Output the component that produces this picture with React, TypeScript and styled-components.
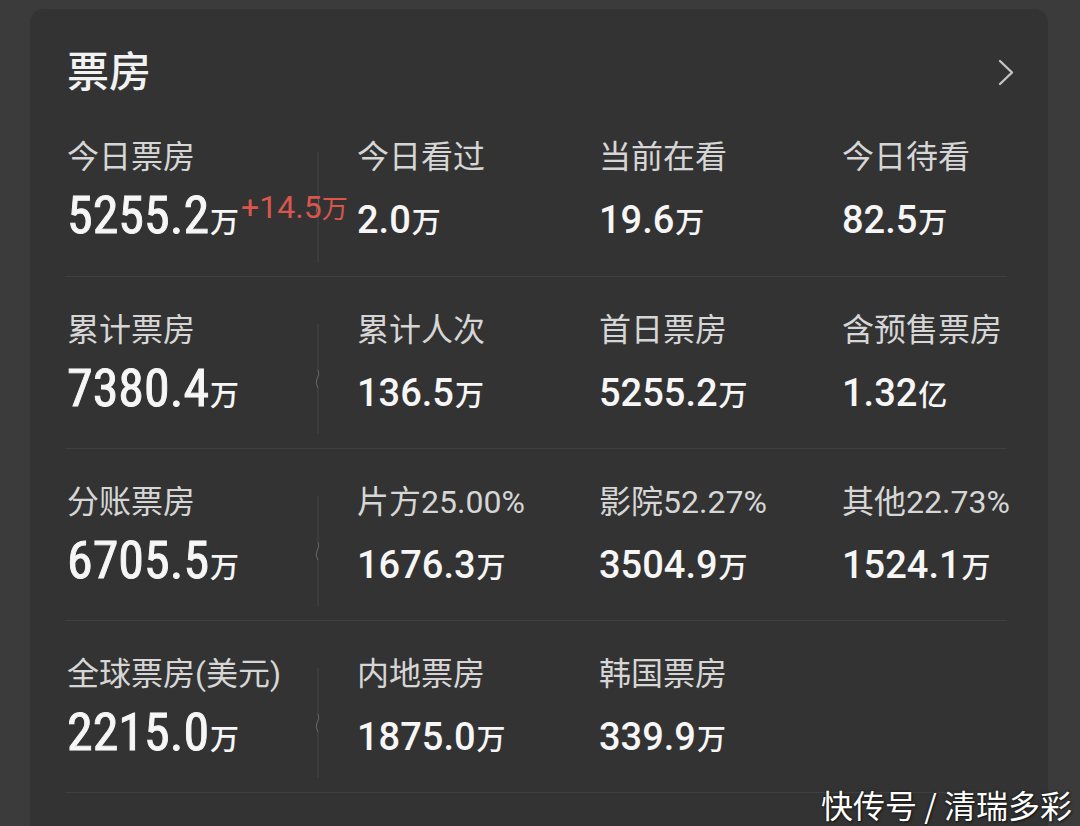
import React from "react";
import styled, { createGlobalStyle } from "styled-components";

const GlobalStyle = createGlobalStyle`
  html, body {
    margin: 0;
    padding: 0;
    background: #3b3b3b;
    height: 826px;
    overflow: hidden;
  }
  body {
    font-family: Roboto, "Noto Sans CJK SC", sans-serif;
  }
`;

interface IStat {
  label: string;
  value: string;
  unit: string;
  delta?: string;
}

const rows: IStat[][] = [
  [
    { label: "今日票房", value: "5255.2", unit: "万", delta: "+14.5" },
    { label: "今日看过", value: "2.0", unit: "万" },
    { label: "当前在看", value: "19.6", unit: "万" },
    { label: "今日待看", value: "82.5", unit: "万" },
  ],
  [
    { label: "累计票房", value: "7380.4", unit: "万" },
    { label: "累计人次", value: "136.5", unit: "万" },
    { label: "首日票房", value: "5255.2", unit: "万" },
    { label: "含预售票房", value: "1.32", unit: "亿" },
  ],
  [
    { label: "分账票房", value: "6705.5", unit: "万" },
    { label: "片方25.00%", value: "1676.3", unit: "万" },
    { label: "影院52.27%", value: "3504.9", unit: "万" },
    { label: "其他22.73%", value: "1524.1", unit: "万" },
  ],
  [
    { label: "全球票房(美元)", value: "2215.0", unit: "万" },
    { label: "内地票房", value: "1875.0", unit: "万" },
    { label: "韩国票房", value: "339.9", unit: "万" },
  ],
];

// column 2 of the grid is the thin separator
const colOf = (j: number) => (j === 0 ? 1 : j + 2);

const Separator = () => (
  <SepWrap>
    <svg width="8" height="110" viewBox="0 0 8 110">
      <path d="M4 0 V46" stroke="#474747" strokeWidth="1" fill="none" />
      <path
        d="M4 46 Q6 50 3 55 Q1 59 4 64"
        stroke="#6a6a6a"
        strokeWidth="1"
        fill="none"
      />
      <path d="M4 64 V110" stroke="#474747" strokeWidth="1" fill="none" />
    </svg>
  </SepWrap>
);

const App = () => {
  return (
    <Page>
      <GlobalStyle />
      <Card>
        <Header>
          <Title>票房</Title>
          <svg width="16" height="27" viewBox="0 0 16 27">
            <polyline
              points="2,2 14,13.5 2,25"
              fill="none"
              stroke="#c4c4c4"
              strokeWidth="2.4"
              strokeLinecap="round"
              strokeLinejoin="round"
            />
          </svg>
        </Header>

        {rows.map((row, i) => (
          <Row key={i} first={i === 0}>
            <Separator />
            {row.map((s, j) => (
              <React.Fragment key={j}>
                <Label col={colOf(j)}>{s.label}</Label>
                <Value col={colOf(j)}>
                  <Num big={j === 0}>{s.value}</Num>
                  <Unit>{s.unit}</Unit>
                  {s.delta && (
                    <Delta>
                      {s.delta}
                      <DeltaUnit>万</DeltaUnit>
                    </Delta>
                  )}
                </Value>
              </React.Fragment>
            ))}
          </Row>
        ))}
        <Row first={false} />
      </Card>
      <Watermark>快传号 / 清瑞多彩</Watermark>
    </Page>
  );
};

const Page = styled.div`
  position: relative;
  height: 826px;
  padding-top: 8px;
  box-sizing: border-box;
`;

const Card = styled.div`
  margin: 0 32px 0 30px;
  height: 840px;
  background: #333333;
  border-radius: 14px;
  padding-left: 37px;
  box-shadow: inset 0 1px 0 rgba(255, 255, 255, 0.04);
`;

const Header = styled.div`
  height: 96px;
  box-sizing: border-box;
  padding: 40px 34px 0 0;
  display: flex;
  justify-content: space-between;
  align-items: flex-start;
  svg {
    margin-top: 11px;
  }
`;

const Title = styled.div`
  font-size: 42px;
  line-height: 50px;
  color: #f2f2f2;
  font-weight: 500;
`;

const Row = styled.div<{ first: boolean }>`
  height: 172px;
  box-sizing: border-box;
  margin-right: 41px;
  margin-left: -2px;
  padding: 33px 0 0 2px;
  border-top: ${(p) => (p.first ? "none" : "1px solid #3f3f3f")};
  display: grid;
  grid-template-columns: 251px 39px 242px 243px 1fr;
  grid-template-rows: 40px auto;
  row-gap: 11px;
  align-items: baseline;
`;

const SepWrap = styled.div`
  grid-column: 2;
  grid-row: 1 / span 2;
  align-self: center;
  margin-left: -4px;
  height: 110px;
  svg {
    display: block;
  }
`;

const Label = styled.div<{ col: number }>`
  grid-column: ${(p) => p.col};
  grid-row: 1;
  font-size: 32px;
  line-height: 40px;
  color: #d6d6d6;
  white-space: nowrap;
`;

const Value = styled.div<{ col: number }>`
  grid-column: ${(p) => p.col};
  grid-row: 2;
  white-space: nowrap;
  color: #f6f6f6;
  line-height: 56px;
`;

const Num = styled.span<{ big: boolean }>`
  font-family: ${(p) =>
    p.big ? `"Liberation Sans Narrow", "Roboto Condensed", Roboto` : "Roboto"},
    sans-serif;
  font-size: ${(p) => (p.big ? "52px" : "38px")};
  font-weight: ${(p) => (p.big ? 400 : 500)};
  -webkit-text-stroke: ${(p) => (p.big ? "0.9px currentColor" : "0")};
`;

const Unit = styled.span`
  font-family: "Noto Sans CJK SC", sans-serif;
  font-size: 29px;
  font-weight: 500;
  margin-left: 1px;
`;

const Delta = styled.span`
  font-family: "Liberation Sans Narrow", Roboto, sans-serif;
  font-size: 32px;
  line-height: 20px;
  color: #d9564d;
  vertical-align: 15px;
  margin-left: 2px;
`;

const DeltaUnit = styled.span`
  font-family: "Noto Sans CJK SC", sans-serif;
  font-size: 26px;
`;

const Watermark = styled.div`
  position: absolute;
  right: 8px;
  bottom: 4px;
  font-family: "Noto Sans CJK SC", sans-serif;
  font-size: 32px;
  line-height: 36px;
  color: #ffffff;
  text-shadow: 0 0 3px rgba(0, 0, 0, 0.6), 1px 1px 2px rgba(0, 0, 0, 0.5);
`;

export default App;
